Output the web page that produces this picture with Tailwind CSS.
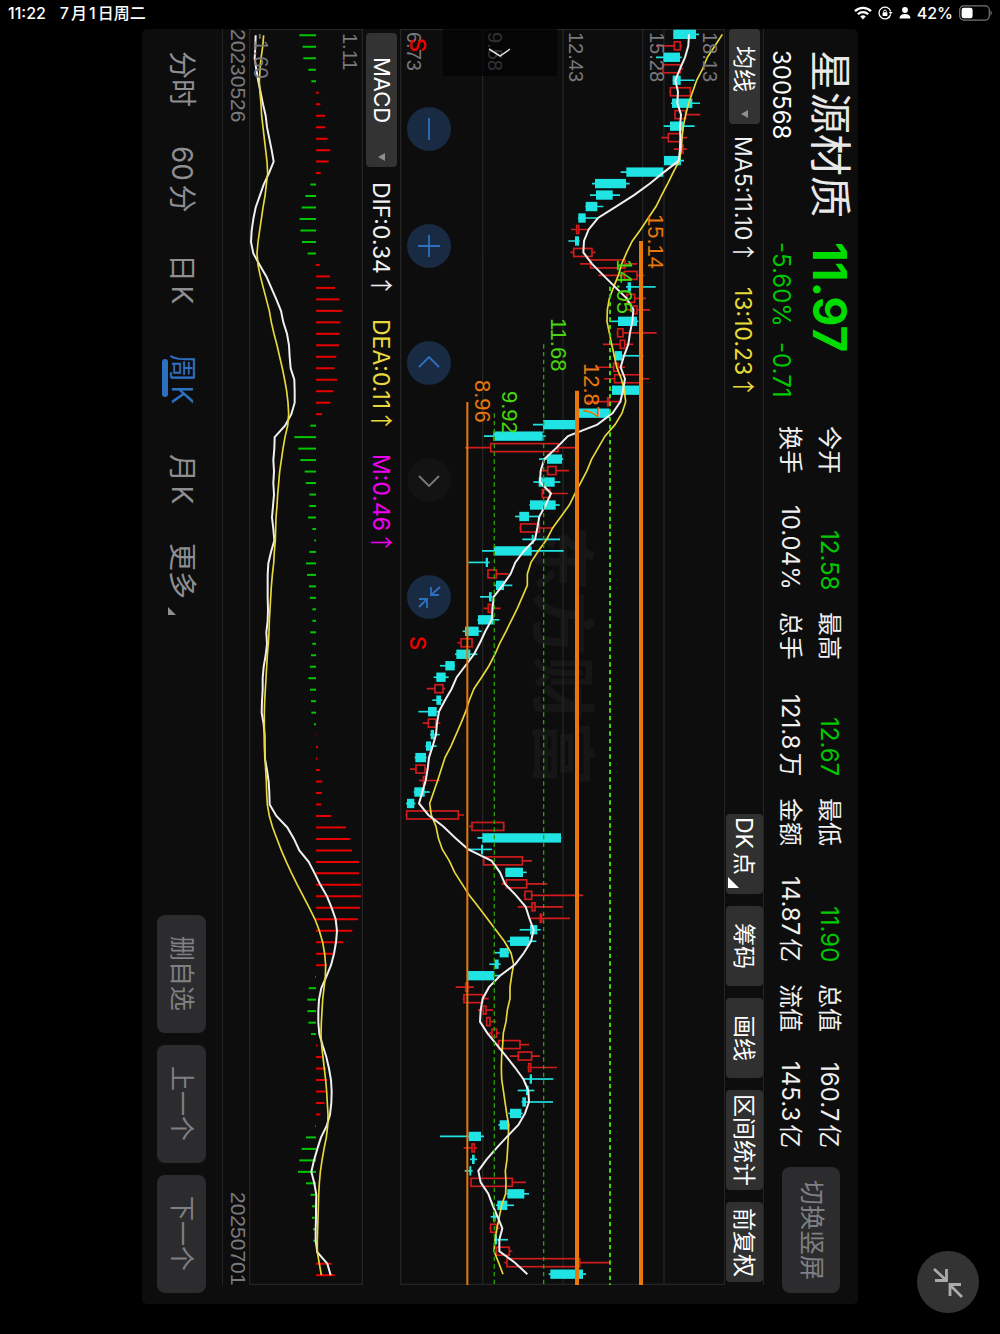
<!DOCTYPE html>
<html lang="zh-CN">
<head>
  <meta charset="UTF-8">
  <meta name="viewport" content="width=device-width, initial-scale=1.0">
  <title>星源材质 300568</title>
  <script src="https://cdn.jsdelivr.net/npm/@tailwindcss/browser@4"></script>
  <style>
    body { font-family: Inter, "Noto Sans CJK SC", sans-serif; text-autospace: normal; }
    /* landscape screen on a portrait device: inline axis runs down, blocks run right to left */
    .landscape { writing-mode: vertical-rl; text-orientation: sideways; }
    .axis { font-family: "Liberation Sans", "Noto Sans CJK SC", sans-serif; }
    .arrow { font-family: "Noto Sans CJK SC", sans-serif; }
  </style>
</head>
<body class="bg-black h-screen flex flex-col text-white overflow-hidden">

<!-- Status bar -->
<header class="h-[29px] shrink-0 flex items-center justify-between pl-2 pr-2 pb-1 text-base font-medium">
  <div class="flex gap-[14px]">
    <span>11:22</span>
    <span>7月1日周二</span>
  </div>
  <div class="flex items-center gap-[6px]">
    <svg class="w-[18px] h-[14px]" viewBox="0 0 18 14" fill="none" stroke="white" stroke-width="2.3">
      <path d="M1 5.2a11.5 11.5 0 0 1 16 0"/>
      <path d="M3.8 8.2a7.4 7.4 0 0 1 10.4 0"/>
      <path d="M9 13.4L6.2 10.5a4 4 0 0 1 5.6 0z" fill="white" stroke="none"/>
    </svg>
    <svg class="w-[15px] h-[14px]" viewBox="0 0 15 14" fill="none" stroke="white" stroke-width="1.3">
      <path d="M12.6 8.5a5.9 5.9 0 1 1 0-3"/>
      <path d="M10.8 6h3.800l-1.900 2.600z" fill="white" stroke="none"/>
      <rect x="4.600" y="6.300" width="4.800" height="3.700" rx=".6" fill="white" stroke="none"/>
      <path d="M5.600 6.500v-1a1.400 1.400 0 0 1 2.800 0v1" stroke-width="1"/>
    </svg>
    <svg class="w-[12px] h-[12px]" viewBox="0 0 12 12" fill="white">
      <circle cx="6" cy="3" r="2.900"/>
      <path d="M.5 11.500c0-3 2-4.500 5.500-4.500s5.500 1.500 5.500 4.500z"/>
    </svg>
    <span>42%</span>
    <svg class="w-[33px] h-[16px]" viewBox="0 0 33 16" fill="none">
      <rect x=".7" y=".9" width="29.600" height="14.200" rx="4" stroke="#777" stroke-width="1.200"/>
      <rect x="2.600" y="2.800" width="11" height="10.400" rx="2.200" fill="white"/>
      <path d="M31.500 5.500c1.700.5 1.700 4.500 0 5z" fill="#777"/>
    </svg>
  </div>
</header>

<main class="flex-1 min-h-0 flex px-[142px] pb-[30px]">
<div class="landscape flex-1 flex flex-col bg-[#0d0d0d] rounded-[5px] overflow-hidden">

  <!-- Quote header -->
  <section class="w-[94px] shrink-0 flex justify-between pt-[21px] pb-[11px]">
    <div class="pr-[6px]">
      <div class="flex items-center gap-[24px] leading-[44px]">
        <h1 class="text-[42px] text-[#e8e8e8]">星源材质</h1>
        <span class="text-[46px] font-bold text-[#00dc00]">11.97</span>
      </div>
      <div class="flex leading-[54px] text-2xl">
        <span class="h-[192px] text-white">300568</span>
        <span class="h-[100px] text-[#00c800]">-5.60%</span>
        <span class="text-[#00c800]">-0.71</span>
      </div>
    </div>
    <div class="flex gap-[19px]">
      <dl class="pr-[9px] h-[722px] grid grid-cols-4 content-start gap-x-[22px] text-2xl leading-[39px] text-[#f0f0f0]">
        <div class="flex justify-between"><dt>今开</dt><dd class="text-[#00c800]">12.58</dd></div>
        <div class="flex justify-between"><dt>最高</dt><dd class="text-[#00c800]">12.67</dd></div>
        <div class="flex justify-between"><dt>最低</dt><dd class="text-[#00c800]">11.90</dd></div>
        <div class="flex justify-between"><dt>总值</dt><dd>160.7亿</dd></div>
        <div class="flex justify-between"><dt>换手</dt><dd>10.04%</dd></div>
        <div class="flex justify-between"><dt>总手</dt><dd>121.8万</dd></div>
        <div class="flex justify-between"><dt>金额</dt><dd>14.87亿</dd></div>
        <div class="flex justify-between"><dt>流值</dt><dd>145.3亿</dd></div>
      </dl>
      <button class="mr-[18px] w-[58px] h-[126px] rounded-lg bg-[#2c2c2e] text-[25px] text-[#808084]">切换竖屏</button>
    </div>
  </section>

  <!-- Moving averages and chart tools -->
  <section class="w-[39px] shrink-0 flex items-center mb-[19px] pb-[3px] border-r border-[#242424] text-[23px] leading-[30px]">
    <button class="w-[31px] h-[95px] rounded bg-[#333] flex items-center justify-between pt-[17px] pb-[6px]">
      <span>均线</span>
      <svg class="w-[7px] h-[8px]" viewBox="0 0 7 8"><path d="M0 4L7 0V8z" fill="#8e8e93"/></svg>
    </button>
    <div class="mt-[12px] flex gap-[24px]">
      <span class="text-[#f0f0f0]">MA5:11.10<span class="arrow">↑</span></span>
      <span class="text-[#e8d93a]">13:10.23<span class="arrow">↑</span></span>
    </div>
    <div class="mt-auto flex gap-3">
      <button class="relative w-[37px] h-[80px] rounded bg-[#303030] pb-4">DK点
        <svg class="absolute left-[2px] bottom-[6px] w-[11px] h-[11px]" viewBox="0 0 11 11"><path d="M0 0L11 11H0z" fill="white"/></svg>
      </button>
      <button class="w-[37px] h-[80px] rounded bg-[#303030]">筹码</button>
      <button class="w-[37px] h-[80px] rounded bg-[#303030]">画线</button>
      <button class="w-[37px] h-[100px] rounded bg-[#303030]">区间统计</button>
      <button class="w-[37px] h-[80px] rounded bg-[#303030]">前复权</button>
    </div>
  </section>

  <!-- Weekly candles -->
  <section class="flex-1 pb-[19px]">
    <div class="relative w-full h-full">
      <span class="absolute left-[129px] top-[497px] text-[65px] leading-[66px] font-bold text-[#161616] whitespace-nowrap">东方财富</span>
      <svg class="absolute inset-0 w-full h-full" viewBox="0 0 975 3768" preserveAspectRatio="none" fill="none">
        <path d="M2 0V3766H974V0M2 2H974M248 0V3768M489 0V3768M728 0V3768M792 0V3768" stroke="#242424" stroke-width="4"/>
        <g id="candles"></g>
        <polyline id="ma13" stroke="#e8d93a" stroke-width="5"/>
        <polyline id="ma5" stroke="#f0f0f0" stroke-width="6"/>
        <path d="M630 773V3768" stroke="#3fd80c" stroke-width="6" stroke-dasharray="13 10"/>
        <path d="M431 946V3768M283 1153V3768" stroke="#2f9c0c" stroke-width="4" stroke-dasharray="13 10"/>
        <path d="M723 636V3768M531 1085V3768" stroke="#e8780c" stroke-width="12"/>
        <path d="M202 1119V3768" stroke="#e8780c" stroke-width="6"/>
      </svg>

      <div class="axis text-xl leading-[20px] text-[#7a7a7e]">
        <span class="absolute left-[4px] top-[3px]">6.73</span>
        <span class="absolute left-[85px] top-[3px]">9.58</span>
        <span class="absolute left-[166px] top-[3px]">12.43</span>
        <span class="absolute left-[247px] top-[3px]">15.28</span>
        <span class="absolute left-[300px] top-[3px]">18.13</span>
      </div>
      <div class="axis text-[22px] leading-[22px] text-[#e8780c]">
        <span class="absolute left-[244px] top-[185px]">15.14</span>
        <span class="absolute left-[180px] top-[334px]">12.87</span>
        <span class="absolute left-[71px] top-[351px]">8.96</span>
      </div>
      <div class="axis text-[22px] leading-[22px] text-[#46d80c]">
        <span class="absolute left-[213px] top-[230px]">14.05</span>
        <span class="absolute left-[147px] top-[289px]">11.68</span>
        <span class="absolute left-[98px] top-[362px]">9.92</span>
      </div>
      <div class="text-[22px] leading-[22px] font-medium text-[#f00000]">
        <span class="absolute left-[7px] top-[9px]">S</span>
        <span class="absolute left-[7px] top-[607px]">S</span>
      </div>

      <button class="absolute left-[43px] top-0 w-[114px] h-[47px] bg-black/60" aria-label="展开">
        <svg class="w-full h-full" viewBox="0 0 114 47" fill="none" stroke="#ddd" stroke-width="1.5"><path d="M46 20L57 27L67 20"/></svg>
      </button>

      <div class="absolute left-[7px] top-[78px] flex gap-[73px]">
        <button class="w-[44px] h-[44px] rounded-full bg-[#182b42]" aria-label="缩小">
          <svg viewBox="0 0 44 44" fill="none" stroke="#2d70c0" stroke-width="1.8"><path d="M22 11V33"/></svg>
        </button>
        <button class="w-[44px] h-[44px] rounded-full bg-[#182b42]" aria-label="放大">
          <svg viewBox="0 0 44 44" fill="none" stroke="#2d70c0" stroke-width="1.8"><path d="M22 11V33M11 22H33"/></svg>
        </button>
        <button class="w-[44px] h-[44px] rounded-full bg-[#182b42]" aria-label="向左">
          <svg viewBox="0 0 44 44" fill="none" stroke="#2d70c0" stroke-width="1.8"><path d="M12 26L22 16L32 26"/></svg>
        </button>
        <button class="w-[44px] h-[44px] rounded-full bg-[#131313]" aria-label="向右">
          <svg viewBox="0 0 44 44" fill="none" stroke="#7a7a7e" stroke-width="1.8"><path d="M12 18L22 28L32 18"/></svg>
        </button>
        <button class="w-[44px] h-[44px] rounded-full bg-[#182b42]" aria-label="收起">
          <svg viewBox="0 0 44 44" fill="none" stroke="#2d70c0" stroke-width="1.8"><path d="M24 12V20H32M24 20L33 12M12 24H20V33M20 24L12 32"/></svg>
        </button>
      </div>
    </div>
  </section>

  <!-- MACD legend -->
  <section class="w-[37px] shrink-0 flex items-center pt-1 text-[23px] leading-[30px]">
    <button class="w-[31px] h-[134px] rounded bg-[#333] flex items-center justify-between pt-[24px] pb-[6px] text-[22px]">
      <span>MACD</span>
      <svg class="w-[7px] h-[8px]" viewBox="0 0 7 8"><path d="M0 4L7 0V8z" fill="#8e8e93"/></svg>
    </button>
    <div class="mt-[15px] flex gap-[22px]">
      <span class="text-[#f0f0f0]">DIF:0.34<span class="arrow">↑</span></span>
      <span class="text-[#e8d93a]">DEA:0.11<span class="arrow">↑</span></span>
      <span class="text-[#f000f0]">M:0.46<span class="arrow">↑</span></span>
    </div>
  </section>

  <!-- MACD chart -->
  <section class="w-[114px] shrink-0 pb-[19px]">
    <div class="relative w-full h-full">
      <svg class="absolute inset-0 w-full h-full" viewBox="0 0 342 3768" preserveAspectRatio="none" fill="none">
        <path d="M2 0V3766H340V0M2 2H340" stroke="#242424" stroke-width="4"/>
        <g id="bars"></g>
        <polyline id="dif" stroke="#f0f0f0" stroke-width="6"/>
        <polyline id="dea" stroke="#e8d93a" stroke-width="5"/>
      </svg>
      <div class="axis text-xl leading-[20px] text-[#7a7a7e]">
        <span class="absolute left-[91px] top-[4px]">1.11</span>
        <span class="absolute left-[2px] top-[4px]">-1.60</span>
      </div>
    </div>
  </section>

  <section class="axis w-[27px] shrink-0 mb-[19px] flex justify-between border-l border-[#242424] text-[21px] leading-[22px] text-[#7a7a7e]">
    <time>20230526</time>
    <time>20250701</time>
  </section>

  <!-- Periods -->
  <footer class="w-[80px] shrink-0 flex items-center justify-between pr-px pb-[11px]">
    <nav class="flex text-[28px] leading-[32px] text-[#8e8e93]">
      <a href="#" class="h-[100px] text-center">分时</a>
      <a href="#" class="h-[100px] text-center">60分</a>
      <a href="#" class="h-[100px] text-center">日K</a>
      <a href="#" class="relative h-[100px] text-center text-[#2d70c0]">周K
        <i class="absolute -left-[4px] top-[30px] w-[6px] h-[38px] rounded-full bg-[#2d70c0]"></i>
      </a>
      <a href="#" class="h-[100px] text-center">月K</a>
      <a href="#" class="relative h-[100px] text-center pb-4">更多
        <svg class="absolute left-[2px] bottom-[14px] w-[8px] h-[8px]" viewBox="0 0 8 8"><path d="M0 0L8 8H0z" fill="#8e8e93"/></svg>
      </a>
    </nav>
    <div class="flex gap-3 text-[25px] text-[#808084]">
      <button class="w-[49px] h-[118px] rounded-lg bg-[#2c2c2e]">删自选</button>
      <button class="w-[49px] h-[118px] rounded-lg bg-[#2c2c2e]">上一个</button>
      <button class="w-[49px] h-[118px] rounded-lg bg-[#2c2c2e]">下一个</button>
    </div>
  </footer>
</div>
</main>

<!-- Exit full screen -->
<button class="fixed right-[21px] bottom-[21px] w-[62px] h-[62px] rounded-full bg-[#333]" aria-label="退出全屏">
  <svg viewBox="0 0 62 62" fill="none" stroke="#aaa" stroke-width="2.8"><path d="M17 18L29 29M18 29.5H29.5V18M45 46L33 34M44 33.5H33V45"/></svg>
</button>

<script>
  const STEP = 34.44;

  // c = close below open, r = close above open; then low, body from, body to, high
  const candles = `c 820 820 888 897,r 768 822 842 846,c 768 790 840 845,r 772 788 842 850,c 818 818 842 884,r 808 810 872 876,
c 813 816 877 900,r 822 824 858 901,c 791 810 850 884,r 784 804 845 862,r 821 840 850 860,c 792 792 843 852,
c 662 679 790 790,c 576 585 678 689,c 570 588 638 660,c 556 557 592 610,c 534 535 557 592,r 513 529 537 568,
c 505 525 537 539,r 511 520 577 587,r 540 571 676 711,r 595 672 712 733,c 678 683 693 767,r 676 680 705 738,
r 680 700 712 750,c 628 654 711 715,r 650 652 670 770,r 609 660 675 700,c 640 644 666 730,r 585 640 655 675,
r 612 643 722 748,c 634 636 720 720,r 560 622 628 665,c 527 530 628 632,c 399 429 527 532,c 252 280 428 437,
r 195 271 475 530,c 417 441 486 490,r 420 442 469 507,c 400 416 464 481,r 424 426 451 504,c 388 390 467 479,
c 345 358 387 418,r 358 361 419 458,c 367 395 401 480,c 246 281 395 491,c 205 257 264 269,r 261 263 290 325,
c 281 288 312 337,c 240 267 275 277,r 251 264 275 302,c 232 234 281 298,c 188 195 236 245,r 172 182 217 220,
c 165 169 211 232,c 120 136 164 165,c 101 109 137 146,r 80 104 130 136,c 97 109 123 127,c 55 84 110 115,
r 68 84 108 121,c 90 92 102 119,c 76 78 93 110,c 44 46 78 80,r 30 47 76 84,r 57 69 77 119,
c 41 43 74 89,c 18 21 43 46,r 17 19 176 192,r 207 215 312 314,c 232 247 483 484,c 202 243 249 276,
r 248 250 368 396,c 316 316 369 380,r 305 318 381 442,r 371 374 396 550,r 353 395 406 489,r 388 420 426 510,
c 359 390 412 422,c 322 330 388 409,c 281 299 326 328,c 268 284 296 302,c 200 203 283 302,r 167 196 204 222,
r 188 191 249 266,r 234 249 259 279,r 257 259 271 289,r 266 275 291 299,r 293 295 361 387,r 330 354 396 420,
r 382 385 393 471,c 370 389 396 460,c 353 378 386 403,c 365 367 378 459,c 325 330 364 368,c 295 299 326 328,
c 120 206 243 252,r 191 215 224 231,c 210 216 224 231,c 194 208 214 218,r 210 212 338 378,c 320 322 373 387,
c 288 292 322 342,c 272 279 287 292,r 268 271 290 300,c 283 285 291 324,r 284 288 329 337,r 313 320 540 630,
c 446 451 549 558`;

  const ma5 = [867,865,855,840,826,834,832,843,840,841,840,836,792,750,702,648,594,566,552,550,576,610,645,680,700,697,690,685,672,662,675,669,661,638,592,504,470,433,422,420,453,437,418,412,405,372,346,332,308,281,278,275,256,240,222,196,170,155,135,117,111,108,98,87,83,77,67,57,85,130,166,205,275,300,315,348,377,388,401,393,372,346,300,267,248,242,240,262,290,318,345,370,385,387,375,355,322,290,260,235,242,265,278,293,307,298,298,345,382];
  const ma13 = [967,945,922,908,890,878,866,857,850,846,844,838,820,803,785,768,745,722,697,680,665,655,641,628,622,621,628,635,643,650,664,673,677,666,645,615,595,575,561,543,525,508,483,458,440,415,393,382,382,367,352,335,318,300,285,267,245,222,208,197,183,168,153,135,124,113,101,89,94,108,115,127,148,164,186,208,235,261,287,313,333,341,335,330,330,322,318,310,308,305,304,305,310,315,320,326,325,323,321,316,318,317,305,298,291,285,282,296,309];
  const macd = [-50,-40,-38,-23,-14,8,13,27,28,35,43,38,14,-17,-32,-43,-49,-47,-42,-25,11,42,57,71,79,73,71,69,61,55,64,52,43,18,-17,-65,-53,-47,-34,-31,-20,-20,-24,-11,-5,-20,-30,-27,-21,-18,-11,-11,-17,-11,-15,-18,-23,-18,-15,-14,-6,1,6,4,11,19,18,16,46,90,103,108,130,130,135,135,132,126,109,82,52,32,-2,-22,-26,-26,-23,-15,4,18,30,33,31,25,13,-2,-30,-43,-50,-54,-30,-16,-12,-12,-9,-8,3,47,56];
  const dif = [20,19,17,22,28,35,42,50,54,61,68,74,60,44,32,20,13,8,6,13,32,52,67,82,96,103,114,120,122,125,136,137,137,127,108,77,76,73,75,73,75,72,69,73,76,66,58,56,56,56,57,56,52,54,50,44,41,41,39,38,44,47,47,48,54,59,61,62,82,115,135,151,179,197,214,234,248,260,264,261,255,246,232,217,210,208,208,211,221,232,240,246,248,247,243,233,216,205,195,187,196,202,201,201,200,200,205,235,245];
  const dea = [44,41,36,33,31,33,36,38,42,46,50,54,56,52,48,42,37,32,27,24,27,34,43,52,61,67,75,84,92,100,107,113,117,119,116,108,102,97,92,89,86,84,81,80,79,76,74,70,67,65,63,61,60,58,55,53,51,49,47,46,46,46,47,48,50,52,53,55,61,71,84,97,112,128,145,163,181,198,211,221,227,230,229,225,221,219,217,216,218,222,226,230,233,235,237,236,232,225,219,214,211,209,208,207,206,205,205,211,217];

  function drawLine(id, values, top) {
    document.getElementById(id).setAttribute('points', values.map((v, i) => `${v},${top + i * STEP}`).join(' '));
  }

  document.getElementById('candles').innerHTML = candles.split(',').map((row, i) => {
    const [type, ...v] = row.trim().split(' ');
    const [low, from, to, high] = v.map(Number);
    const y = 16 + i * STEP;
    if (type === 'c') {
      return `<path d="M${low} ${y}H${high}" stroke="#20e4e4" stroke-width="5"/><rect x="${from}" y="${y - 14}" width="${to - from}" height="28" fill="#20e4e4"/>`;
    }
    return `<path d="M${low} ${y}H${from}M${to} ${y}H${high}" stroke="#d01c1c" stroke-width="5"/><rect x="${from + 1}" y="${y - 12}" width="${to - from - 2}" height="24" stroke="#d01c1c" stroke-width="5"/>`;
  }).join('');

  document.getElementById('bars').innerHTML = macd.map((v, i) =>
    `<path d="M201 ${19 + i * STEP}h${v}" stroke="${v > 0 ? '#e80000' : '#00c800'}" stroke-width="6"/>`).join('');

  drawLine('ma5', ma5, 16);
  drawLine('ma13', ma13, 16);
  drawLine('dif', dif, 19);
  drawLine('dea', dea, 19);
</script>

</body>
</html>
